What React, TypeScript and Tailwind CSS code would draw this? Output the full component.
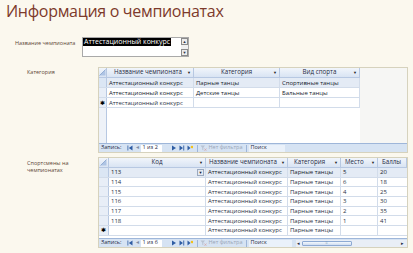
import React from "react";

const hdrCls =
  "relative flex h-full items-center justify-center border-r border-[#b7c8e2] bg-gradient-to-b from-[#f1f5fb] to-[#d9e4f3] text-[6.2px] text-[#1e2a44]";

function Arrow() {
  return <span className="absolute right-[2px] top-[1px] text-[4px] leading-[8px] text-[#222]">▼</span>;
}

function SelectorHead() {
  return (
    <div className="flex h-full items-center justify-center border-r border-[#b7c8e2] bg-gradient-to-b from-[#f1f5fb] to-[#d9e4f3]">
      <svg width="7" height="7" viewBox="0 0 7 7">
        <path d="M0.5 6.5 L6.5 0.5 L6.5 6.5 Z" fill="#aec4e4" />
        <path d="M0.5 6.5 L6.5 0.5" stroke="#7e9cc9" strokeWidth="0.7" />
      </svg>
    </div>
  );
}

function NavIcon({ d, star }: { d: string; star?: boolean }) {
  return (
    <svg width="6" height="6" viewBox="0 0 6 6" className="mx-[1px]">
      <path d={d} fill="#2f5da3" />
      {star && <circle cx="5" cy="2" r="1.3" fill="#f1c21b" />}
    </svg>
  );
}

function NavBar({ count, scroll }: { count: string; scroll?: boolean }) {
  return (
    <div className="flex h-[9px] items-center border-t border-[#9eb6d9] bg-[#d6e3f3] text-[5.5px] leading-none text-[#1e2a44]">
      <span className="ml-[2px] mr-[4px]">Запись:</span>
      <NavIcon d="M0.5 0.5 h0.8 v5 h-0.8 Z M5.5 0.5 L1.8 3 L5.5 5.5 Z" />
      <span className="mx-[2px] text-[#7c8ca6]">◂</span>
      <span className="flex h-[7px] w-[21px] items-center bg-white pl-[2px]">1 из {count}</span>
      <span className="ml-[8px]" />
      <NavIcon d="M1 0.5 L5 3 L1 5.5 Z" />
      <NavIcon d="M0.5 0.5 L4 3 L0.5 5.5 Z M4.3 0.5 h0.9 v5 h-0.9 Z" />
      <NavIcon d="M0.5 0.5 L3.5 3 L0.5 5.5 Z" star />
      <span className="ml-[3px] h-[7px] border-l border-[#9eb6d9]" />
      <svg width="7" height="6" viewBox="0 0 7 6" className="ml-[2px]">
        <path d="M0.5 0.5 H5 L3.3 2.8 V5.5 L2.3 4.8 V2.8 Z" fill="#b9c3d2" />
        <path d="M4.3 3.6 L6.6 5.8 M6.6 3.6 L4.3 5.8" stroke="#d39b9b" strokeWidth="0.6" />
      </svg>
      <span className="ml-[2px] text-[#9aa6b8]">Нет фильтра</span>
      <span className="ml-[3px] h-[7px] border-l border-[#9eb6d9]" />
      <span
        className={`ml-[2px] flex h-[7px] items-center bg-[#eaf1fa] pl-[2px] ${scroll ? "w-[43px]" : "w-[36px]"}`}
      >
        Поиск
      </span>
      {scroll && (
        <div className="ml-[4px] flex h-[7px] flex-1 items-center bg-[#e9eef6]">
          <span className="w-[6px] text-center text-[5px]">◂</span>
          <span className="flex h-[5px] w-[50px] items-center justify-center rounded-[1px] border border-[#8eaad3] bg-gradient-to-b from-[#f4f8fd] to-[#cfdcf0] text-[4px] text-[#6d86ad]">
            ⁞⁞
          </span>
          <span className="flex-1" />
          <span className="mr-[2px] w-[6px] text-center text-[5px]">▸</span>
        </div>
      )}
    </div>
  );
}

function Cell({ w, children, cls = "" }: { w: string; children?: React.ReactNode; cls?: string }) {
  return (
    <div className={`flex h-full shrink-0 items-center overflow-hidden whitespace-nowrap border-r border-[#d2dcea] pl-[2px] ${w} ${cls}`}>
      {children}
    </div>
  );
}

function Sel({ w, mark, cur }: { w: string; mark?: boolean; cur?: boolean }) {
  return (
    <div
      className={`flex h-full shrink-0 items-center justify-center border-r border-[#b7c8e2] ${w} ${
        cur ? "bg-[#dbe6f4]" : "bg-[#e8eef7]"
      }`}
    >
      {mark && <span className="text-[6px] leading-none text-black">✱</span>}
    </div>
  );
}

const champs = [
  { cat: "Парные танцы", sport: "Спортивные танцы" },
  { cat: "Детские танцы", sport: "Бальные танцы" },
];

const athletes = [
  { code: "113", place: "5", score: "20" },
  { code: "114", place: "6", score: "18" },
  { code: "115", place: "4", score: "25" },
  { code: "116", place: "3", score: "30" },
  { code: "117", place: "2", score: "35" },
  { code: "118", place: "1", score: "41" },
];

export default function App() {
  return (
    <div className="h-[253px] w-[413px] overflow-hidden bg-[#fbf8ee] font-['Open_Sans','Noto_Sans',sans-serif] leading-none text-[#2a3145]">
      <h1 className="pl-[6px] pt-[2px] text-[16px] leading-[19px] tracking-[-0.3px] text-[#7d3a2b]">
        Информация о чемпионатах
      </h1>

      <div className="mt-[16px] flex">
        <div className="w-[82px] pl-[15px] pt-[2px] text-[5.5px] leading-[8px] text-[#5b4636]">Название чемпионата</div>
        <div className="flex h-[20px] w-[107px] border border-[#a9a9a9] bg-white">
          <div className="flex-1">
            <div className="h-[8px] w-fit bg-black px-[1px] text-[7px] leading-[8px] text-white">Аттестационный конкурс</div>
          </div>
          <div className="flex w-[7px] flex-col justify-between bg-[#f0f0f0]">
            <div className="flex h-[7px] items-center justify-center border border-[#8a8a8a] bg-[#ececec] text-[4px] leading-none">▲</div>
            <div className="flex h-[7px] items-center justify-center border border-[#8a8a8a] bg-[#ececec] text-[4px] leading-none">▼</div>
          </div>
        </div>
      </div>

      <div className="mt-[10px] flex">
        <div className="w-[98px] pl-[27px] pt-[1px] text-[5.5px] leading-[8px] text-[#5b4636]">Категория</div>
        <div className="flex h-[86px] w-[310px] flex-col border border-[#d6d2bd] bg-white">
          <div className="flex min-h-0 flex-1">
            <div className="flex flex-col text-[6px]">
              <div className="flex h-[10px] border-b border-[#b7c8e2]">
                <div className="w-[8px]"><SelectorHead /></div>
                <div className={`${hdrCls} w-[87px] pr-[4px]`}>Название чемпионата<Arrow /></div>
                <div className={`${hdrCls} w-[86px]`}>Категория<Arrow /></div>
                <div className={`${hdrCls} w-[80px]`}>Вид спорта<Arrow /></div>
              </div>
              {champs.map((c, i) => (
                <div
                  key={i}
                  className={`flex h-[10px] border-b border-[#d2dcea] font-medium text-[#151b2c] ${i === 0 ? "bg-[#e4ebf5]" : ""}`}
                >
                  <Sel w="w-[8px]" cur={i === 0} />
                  <Cell w="w-[87px]">Аттестационный конкурс</Cell>
                  <Cell w="w-[86px]">{c.cat}</Cell>
                  <Cell w="w-[80px]">{c.sport}</Cell>
                </div>
              ))}
              <div className="flex h-[10px] border-b border-[#d2dcea]">
                <Sel w="w-[8px]" mark />
                <Cell w="w-[87px]">Аттестационный конкурс</Cell>
                <Cell w="w-[86px]" />
                <Cell w="w-[80px]" />
              </div>
              <div className="flex flex-1">
                <div className="w-[8px] border-r border-[#b7c8e2] bg-[#eef2f8]" />
                <div className="flex-1 bg-white" />
              </div>
            </div>
            <div className="flex-1 bg-[#f6f6f4] bg-[radial-gradient(#dedede_0.5px,transparent_0.6px)] bg-[length:2px_2px]" />
          </div>
          <NavBar count="2" />
        </div>
      </div>

      <div className="mt-[4px] flex">
        <div className="w-[98px] pl-[27px] pt-[3px] pr-[4px] text-[5.5px] leading-[7px] text-[#5b4636]">
          Спортсмены на чемпионатах
        </div>
        <div className="flex h-[91px] w-[310px] flex-col border border-[#d6d2bd] bg-white text-[6px]">
          <div className="flex h-[10px] border-b border-[#b7c8e2]">
            <div className="w-[10px]"><SelectorHead /></div>
            <div className={`${hdrCls} w-[97px]`}>Код<Arrow /></div>
            <div className={`${hdrCls} w-[82px] justify-start pl-[3px]`}>Название чемпионата<Arrow /></div>
            <div className={`${hdrCls} w-[53px] justify-start pl-[6px]`}>Категория<Arrow /></div>
            <div className={`${hdrCls} w-[37px] justify-start pl-[4px]`}>Место<Arrow /></div>
            <div className={`${hdrCls} flex-1 justify-start pl-[4px]`}>Баллы</div>
          </div>
          {athletes.map((a, i) => (
            <div
              key={a.code}
              className={`flex h-[9.7px] border-b border-[#d2dcea] ${i === 0 ? "bg-[#e4ebf5] font-medium text-[#151b2c]" : ""}`}
            >
              <Sel w="w-[10px]" cur={i === 0} />
              <Cell w="w-[97px]" cls="relative">
                {a.code}
                {i === 0 && (
                  <span className="absolute right-[1px] top-[1px] flex h-[7px] w-[7px] items-center justify-center border border-[#9aa9bf] bg-[#e4e9f1] text-[4px] font-normal">
                    ▼
                  </span>
                )}
              </Cell>
              <Cell w="w-[82px]">Аттестационный конкурс</Cell>
              <Cell w="w-[53px]">Парные танцы</Cell>
              <Cell w="w-[37px]">{a.place}</Cell>
              <Cell w="flex-1" cls="border-r-0">{a.score}</Cell>
            </div>
          ))}
          <div className="flex h-[9.7px] border-b border-[#d2dcea]">
            <Sel w="w-[10px]" mark />
            <Cell w="w-[97px]" />
            <Cell w="w-[82px]">Аттестационный конкурс</Cell>
            <Cell w="w-[53px]">Парные танцы</Cell>
            <Cell w="w-[37px]" />
            <Cell w="flex-1" cls="border-r-0" />
          </div>
          <div className="flex-1" />
          <NavBar count="6" scroll />
        </div>
      </div>
    </div>
  );
}
